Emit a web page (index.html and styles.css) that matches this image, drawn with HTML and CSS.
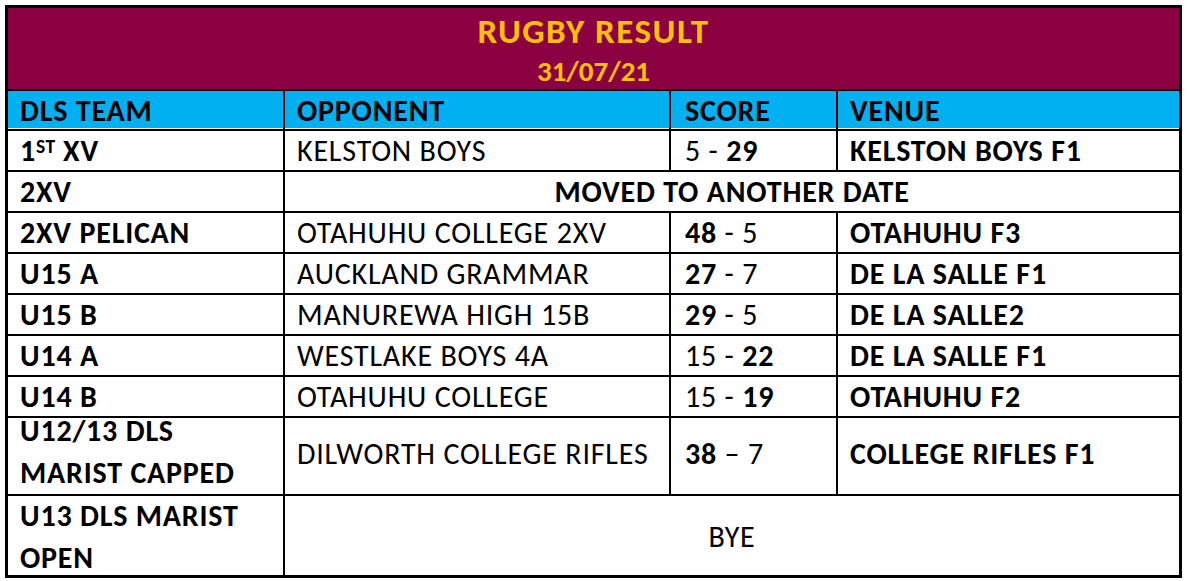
FILE: index.html
```html
<!DOCTYPE html>
<html lang="en">
<head>
<meta charset="utf-8">
<title>Rugby Result</title>
<link rel="stylesheet" href="styles.css">
</head>
<body>
<div class="sheet">
  <div class="banner">
    <div class="title">RUGBY RESULT</div>
    <div class="date">31/07/21</div>
  </div>

  <div class="hd">DLS TEAM</div>
  <div class="hd">OPPONENT</div>
  <div class="hd sc">SCORE</div>
  <div class="hd">VENUE</div>

  <div class="c b">1<sup class="sup">ST</sup> XV</div>
  <div class="c">KELSTON BOYS</div>
  <div class="c sc">5 - <b>29</b></div>
  <div class="c b">KELSTON BOYS F1</div>

  <div class="c b">2XV</div>
  <div class="c b span3">MOVED TO ANOTHER DATE</div>

  <div class="c b">2XV PELICAN</div>
  <div class="c">OTAHUHU COLLEGE 2XV</div>
  <div class="c sc"><b>48</b> - 5</div>
  <div class="c b">OTAHUHU F3</div>

  <div class="c b">U15 A</div>
  <div class="c">AUCKLAND GRAMMAR</div>
  <div class="c sc"><b>27</b> - 7</div>
  <div class="c b">DE LA SALLE F1</div>

  <div class="c b">U15 B</div>
  <div class="c">MANUREWA HIGH 15B</div>
  <div class="c sc"><b>29</b> - 5</div>
  <div class="c b">DE LA SALLE2</div>

  <div class="c b">U14 A</div>
  <div class="c">WESTLAKE BOYS 4A</div>
  <div class="c sc">15 - <b>22</b></div>
  <div class="c b">DE LA SALLE F1</div>

  <div class="c b">U14 B</div>
  <div class="c">OTAHUHU COLLEGE</div>
  <div class="c sc">15 - <b>19</b></div>
  <div class="c b">OTAHUHU F2</div>

  <div class="c b two-a"><div class="stack">U12/13 DLS<br>MARIST CAPPED</div></div>
  <div class="c mid">DILWORTH COLLEGE RIFLES</div>
  <div class="c mid sc"><b>38</b>&nbsp;– 7</div>
  <div class="c mid b">COLLEGE RIFLES F1</div>

  <div class="c b two-b"><div class="stack">U13 DLS MARIST<br>OPEN</div></div>
  <div class="c span3 bye">BYE</div>
</div>
</body>
</html>
```
FILE: styles.css
```css
html, body {
  margin: 0;
  padding: 0;
  background: #fff;
}

.sheet {
  display: grid;
  grid-template-columns: 275px 384px 165px 341px;
  grid-template-rows: 81px 38px repeat(7, 39px) 76px 79px;
  gap: 2px;
  width: max-content;
  margin: 5px;
  background: #000;
  border: 3px solid #000;
  font-family: "Carlito", "Lato", sans-serif;
  font-size: 30px;
  letter-spacing: 0.8px;
  color: #000;
}

.banner {
  grid-column: 1 / -1;
  background: #8b0041;
  color: #ffc000;
  text-align: center;
  font-weight: 700;
  padding-top: 3.3px;
}

.title {
  font-size: 35px;
  line-height: 40px;
  letter-spacing: 1.5px;
}

.date {
  font-size: 29px;
  line-height: 30px;
  margin-top: 5px;
  letter-spacing: 0;
}

.hd {
  background: #00b0f0;
  border-bottom: 1px solid #fff;
  font-weight: 700;
  padding: 3px 12px 0;
  line-height: 34px;
  white-space: nowrap;
}

.c {
  background: #fff;
  padding: 3px 12px 0;
  line-height: 34px;
  white-space: nowrap;
}

.b {
  font-weight: 700;
}

.sc {
  padding-left: 14px;
}

.sup {
  font-size: 0.65em;
  line-height: 0;
  vertical-align: 0.4em;
  letter-spacing: 0.4px;
}

.span3 {
  grid-column: 2 / -1;
  text-align: center;
}

.mid {
  display: flex;
  align-items: center;
  padding-top: 0;
  padding-bottom: 4px;
}

.two-a {
  padding-top: 0;
  line-height: 42px;
}

.two-a .stack {
  margin-top: -8px;
}

.two-b {
  padding-top: 0;
  line-height: 42px;
}

.two-b .stack {
  margin-top: -1px;
}

.bye {
  display: flex;
  align-items: center;
  justify-content: center;
  padding-top: 3px;
}
```
